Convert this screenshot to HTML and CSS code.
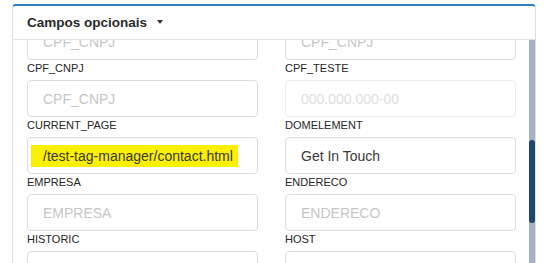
FILE: index.html
```html
<!DOCTYPE html>
<html lang="pt-BR">
<head>
  <meta charset="UTF-8">
  <meta name="viewport" content="width=device-width, initial-scale=1.0">
  <title>Campos opcionais</title>
  <link rel="stylesheet" href="styles.css">
</head>
<body>
  <div class="panel">
    <div class="panel-header">
      <span class="panel-title">Campos opcionais</span>
      <span class="caret"></span>
    </div>
    <div class="panel-body">
      <div class="fields">
        <!-- fields above were scrolled out of view, only their inputs show -->
        <div class="field">
          <input type="text" placeholder="CPF_CNPJ">
        </div>
        <div class="field">
          <input type="text" placeholder="CPF_CNPJ">
        </div>
        <div class="field">
          <label>CPF_CNPJ</label>
          <input type="text" placeholder="CPF_CNPJ">
        </div>
        <div class="field">
          <label>CPF_TESTE</label>
          <input type="text" class="faded" placeholder="000.000.000-00">
        </div>
        <div class="field">
          <label>CURRENT_PAGE</label>
          <div class="fake-input"><span class="mark">/test-tag-manager/contact.html</span></div>
        </div>
        <div class="field">
          <label>DOMELEMENT</label>
          <input type="text" value="Get In Touch">
        </div>
        <div class="field">
          <label>EMPRESA</label>
          <input type="text" placeholder="EMPRESA">
        </div>
        <div class="field">
          <label>ENDERECO</label>
          <input type="text" placeholder="ENDERECO">
        </div>
        <div class="field">
          <label>HISTORIC</label>
          <input type="text">
        </div>
        <div class="field">
          <label>HOST</label>
          <input type="text">
        </div>
      </div>
      <div class="scrollbar"><div class="thumb"></div></div>
    </div>
  </div>
</body>
</html>
```

FILE: styles.css
```css
html, body {
  margin: 0;
  padding: 0;
  background: #fff;
  overflow: hidden;
  font-family: "Liberation Sans", Arial, sans-serif;
  color: #333;
}
.panel {
  margin: 4px 13px 0 12px;
  height: 300px;
  border: 1px solid #dedede;
  border-top: 2px solid #2e7dc6;
  border-radius: 4px 4px 0 0;
  background: #fff;
  overflow: hidden;
}
.panel-header {
  height: 33px;
  display: flex;
  align-items: center;
  padding-left: 14px;
  border-bottom: 1px solid #e2e2e2;
}
.panel-title {
  font-size: 13.5px;
  font-weight: bold;
  color: #2a2a2a;
}
.caret {
  width: 0;
  height: 0;
  margin-left: 10px;
  margin-top: -1px;
  border-top: 4px solid #333;
  border-left: 3.5px solid transparent;
  border-right: 3.5px solid transparent;
}
.panel-body {
  position: relative;
  height: 264px;
  overflow: hidden;
  padding: 0 19px 0 14px;
}
.fields {
  display: grid;
  grid-template-columns: 231px 231px;
  column-gap: 27px;
  margin-top: -17px;
}
.field label {
  display: block;
  margin: 2px 0 5px;
  line-height: 13px;
  font-size: 11px;
  color: #262626;
}
.field input,
.fake-input {
  box-sizing: border-box;
  display: block;
  width: 100%;
  height: 37px;
  padding: 0 15px;
  border: 1px solid #dcdcdc;
  border-radius: 4px;
  background: #fff;
  font-family: "Liberation Sans", Arial, sans-serif;
  font-size: 14px;
  color: #3a3a3a;
  outline: none;
}
.field input::placeholder {
  color: #c6c6c6;
}
.field input.faded {
  border-color: #ededed;
}
.field input.faded::placeholder {
  color: #dedede;
}
.fake-input {
  display: flex;
  align-items: center;
}
.mark {
  background: #faf000;
  padding: 3px 5px 3px 12px;
  margin-left: -12px;
  line-height: 16px;
}
.scrollbar {
  position: absolute;
  top: 0;
  right: 0;
  width: 6px;
  height: 100%;
  background: #a4b2c3;
}
.thumb {
  margin-top: 100px;
  height: 83px;
  border-radius: 3px;
  background: #1d4677;
}
```
